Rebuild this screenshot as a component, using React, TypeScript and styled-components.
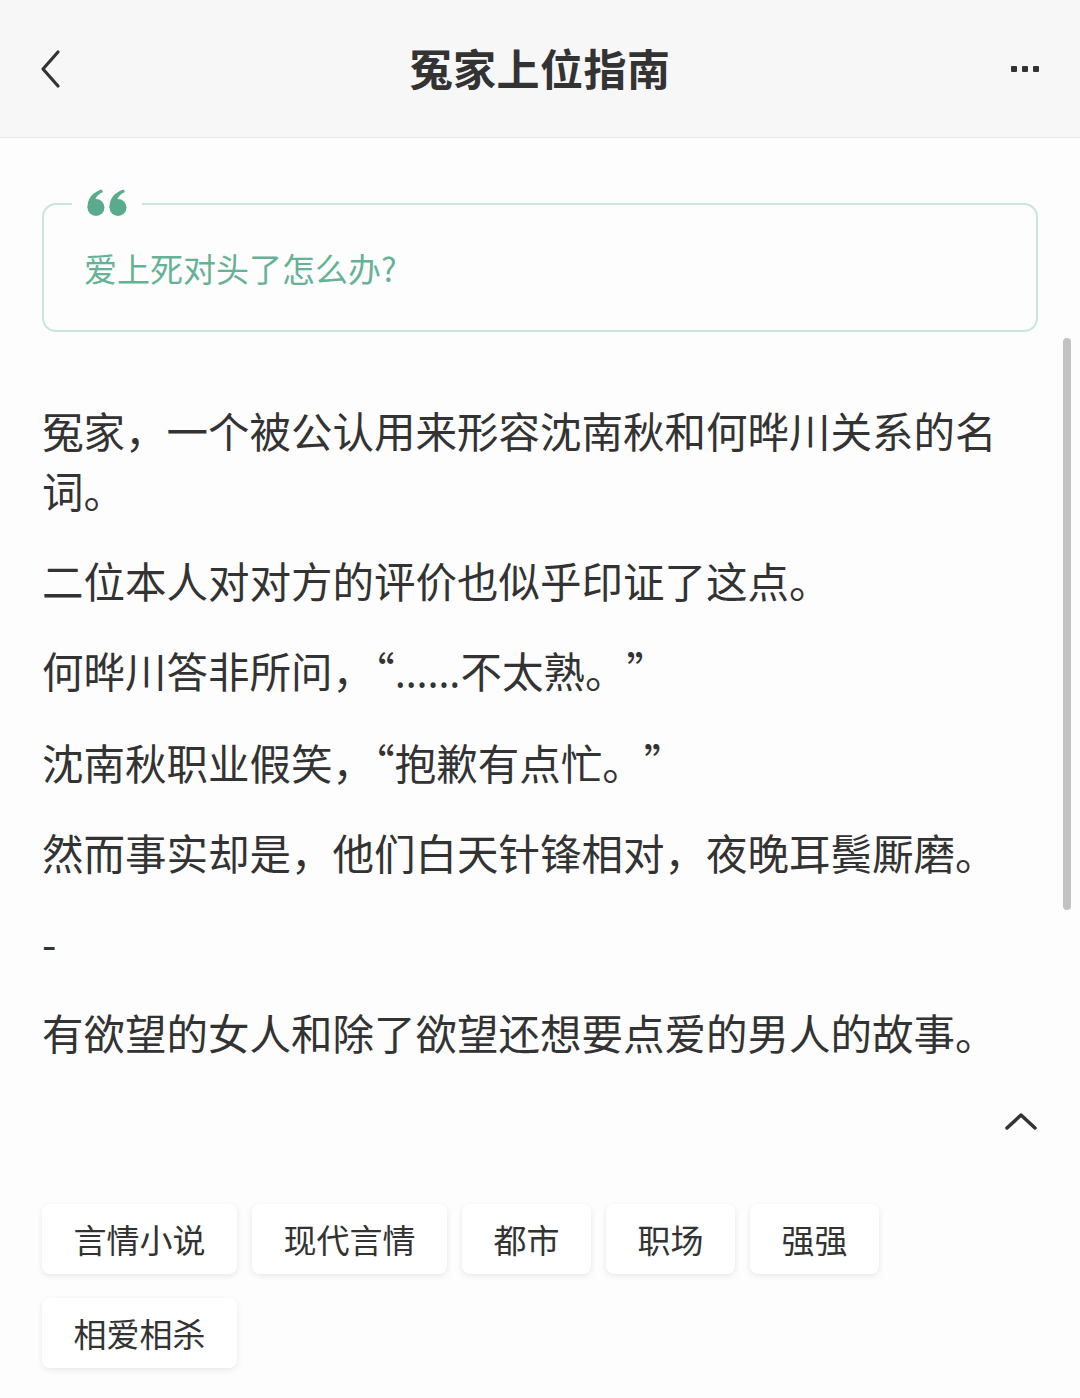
import React from 'react';
import styled, { createGlobalStyle } from 'styled-components';

const GlobalStyle = createGlobalStyle`
  html, body {
    margin: 0;
    padding: 0;
    background: #fdfdfd;
  }
  body {
    font-family: "Noto Sans CJK SC", "Noto Sans", sans-serif;
    color: #333;
  }
`;

const Page = styled.div`
  position: relative;
  width: 1080px;
  min-height: 1398px;
  background: #fdfdfd;
  overflow: hidden;
`;

const TopBar = styled.header`
  display: grid;
  grid-template-columns: 120px 1fr 120px;
  align-items: center;
  height: 137px;
  background: #f7f7f7;
  border-bottom: 1px solid #e6e6e6;
`;

const BarButton = styled.div<{ $align: 'start' | 'end' }>`
  display: flex;
  justify-content: ${(p) => (p.$align === 'start' ? 'flex-start' : 'flex-end')};
  padding: ${(p) => (p.$align === 'start' ? '0 0 0 36px' : '0 40px 0 0')};
  align-items: center;
`;

const Title = styled.h1`
  margin: 0 0 4px;
  text-align: center;
  font-size: 43px;
  font-weight: 700;
  color: #333;
  letter-spacing: 0.5px;
`;

const Content = styled.main`
  padding: 65px 40px 40px 42px;
`;

const QuoteBox = styled.div`
  position: relative;
  height: 129px;
  margin-right: 2px;
  box-sizing: border-box;
  border: 2.5px solid #c9e6da;
  border-radius: 14px;
  display: flex;
  align-items: center;
  padding: 0 40px;
`;

const QuoteMark = styled.div`
  position: absolute;
  top: -16px;
  left: 28px;
  padding: 0 14px;
  background: #fdfdfd;
  line-height: 0;
`;

const QuoteText = styled.p`
  margin: 0;
  font-size: 33px;
  color: #66b296;
`;

const Intro = styled.section`
  max-width: 980px;
  margin-top: 68px;
`;

const Para = styled.p`
  margin: 0 0 30px;
  font-size: 41.5px;
  line-height: 60px;
  color: #333;
`;

// latin-style ellipsis with baseline dots
const Dots = styled.span`
  font-family: "Noto Sans", sans-serif;
`;

// keeps the full stop full-width before a closing quote
const QuoteTail = styled.span`
  text-spacing-trim: space-all;
`;

const FoldRow = styled.div`
  display: flex;
  justify-content: flex-end;
  align-items: center;
  height: 24px;
  margin-top: 47px;
  padding-right: 2px;
`;

const TagList = styled.div`
  display: flex;
  flex-wrap: wrap;
  gap: 24px 15px;
  margin-top: 71px;
`;

const Tag = styled.span`
  display: inline-flex;
  align-items: center;
  height: 70px;
  padding: 0 31.5px;
  background: #fff;
  border-radius: 8px;
  box-shadow: 0 2px 6px rgba(0, 0, 0, 0.09);
  font-size: 33px;
  color: #333;
`;

const ScrollThumb = styled.div`
  position: absolute;
  right: 9px;
  top: 338px;
  width: 8px;
  height: 572px;
  border-radius: 4px;
  background: #c2c2c2;
`;

const paragraphs: React.ReactNode[] = [
  '冤家，一个被公认用来形容沈南秋和何晔川关系的名词。',
  '二位本人对对方的评价也似乎印证了这点。',
  <>何晔川答非所问，“<Dots>……</Dots>不太熟<QuoteTail>。”</QuoteTail></>,
  <>沈南秋职业假笑，“抱歉有点忙<QuoteTail>。”</QuoteTail></>,
  '然而事实却是，他们白天针锋相对，夜晚耳鬓厮磨。',
  '-',
  '有欲望的女人和除了欲望还想要点爱的男人的故事。',
];

const tags = ['言情小说', '现代言情', '都市', '职场', '强强', '相爱相杀'];

const App = () => {
  return (
    <Page>
      <GlobalStyle />
      <TopBar>
        <BarButton $align="start">
          <svg width="28" height="42" viewBox="0 0 28 42">
            <path d="M22 4 L7 21 L22 38" fill="none" stroke="#333" strokeWidth="3.2" strokeLinecap="round" strokeLinejoin="round" />
          </svg>
        </BarButton>
        <Title>冤家上位指南</Title>
        <BarButton $align="end">
          <svg width="30" height="8" viewBox="0 0 30 8">
            <rect x="1" y="1" width="6" height="6" rx="1" fill="#333" />
            <rect x="12" y="1" width="6" height="6" rx="1" fill="#333" />
            <rect x="23" y="1" width="6" height="6" rx="1" fill="#333" />
          </svg>
        </BarButton>
      </TopBar>

      <Content>
        <QuoteBox>
          <QuoteMark>
            <svg width="42" height="27" viewBox="0 0 42 27">
              {/* two filled opening quotes */}
              <g fill="#5aab8b">
                <circle cx="10" cy="18.5" r="8.5" />
                <path d="M1.6 19 C1.2 10 6 3.5 15.5 0.5 L17 3 C11.5 5.5 9 9 9 13 Z" />
                <circle cx="32" cy="18.5" r="8.5" />
                <path d="M23.6 19 C23.2 10 28 3.5 37.5 0.5 L39 3 C33.5 5.5 31 9 31 13 Z" />
              </g>
            </svg>
          </QuoteMark>
          <QuoteText>爱上死对头了怎么办?</QuoteText>
        </QuoteBox>

        <Intro>
          {paragraphs.map((text, i) => (
            <Para key={i}>{text}</Para>
          ))}
        </Intro>

        <FoldRow>
          <svg width="34" height="22" viewBox="0 0 34 22">
            <path d="M3 18 L17 5 L31 18" fill="none" stroke="#333" strokeWidth="3.5" strokeLinecap="round" strokeLinejoin="round" />
          </svg>
        </FoldRow>

        <TagList>
          {tags.map((tag) => (
            <Tag key={tag}>{tag}</Tag>
          ))}
        </TagList>
      </Content>

      <ScrollThumb />
    </Page>
  );
};

export default App;
